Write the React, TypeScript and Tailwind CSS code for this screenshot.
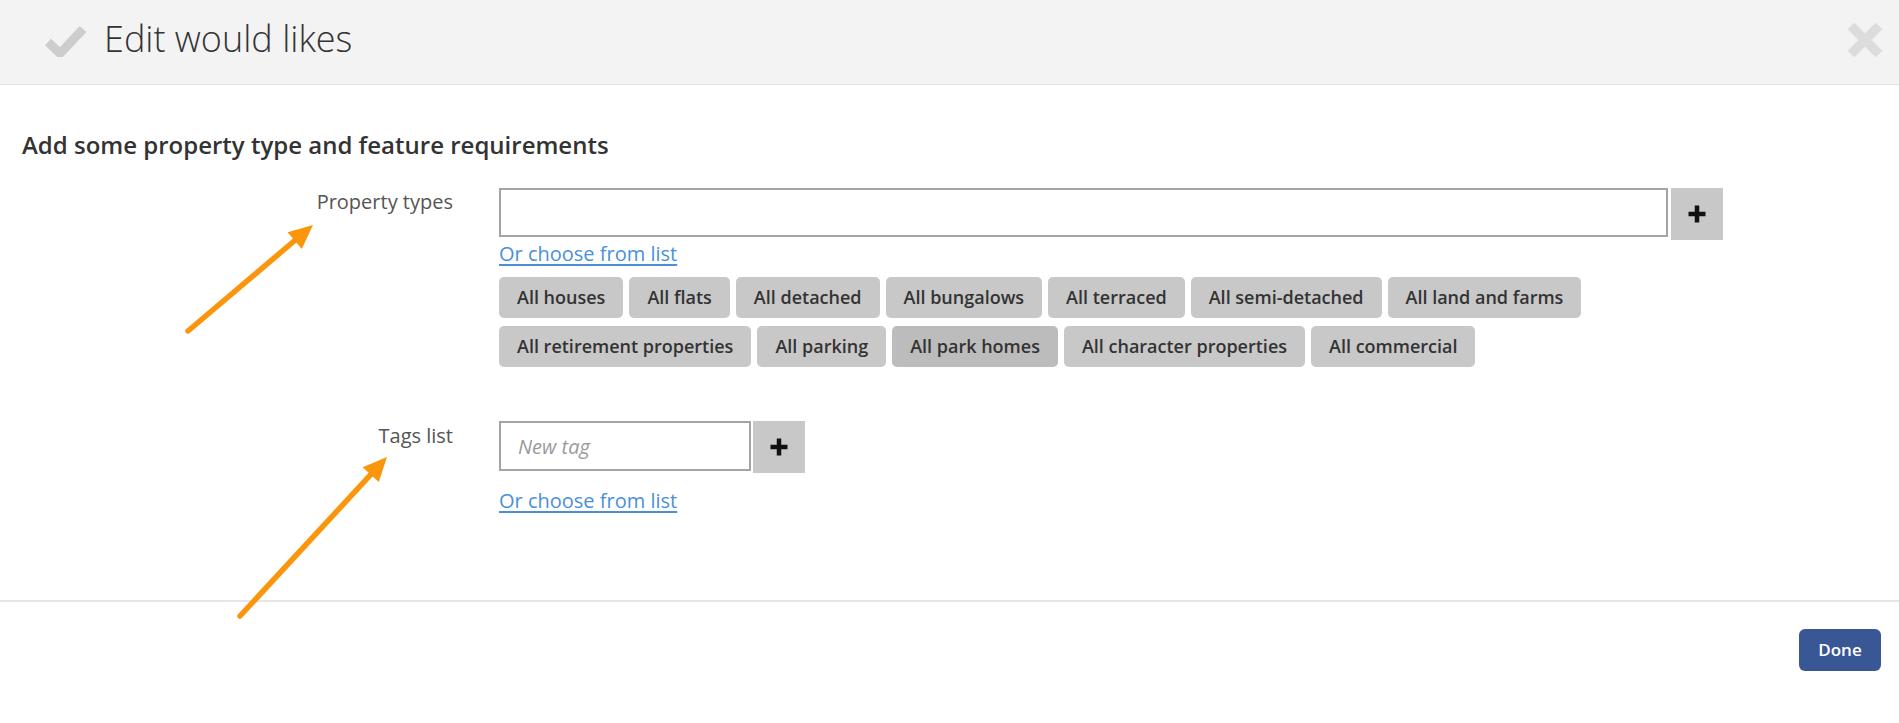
import React from 'react';

const propertyTypes = [
    'All houses',
    'All flats',
    'All detached',
    'All bungalows',
    'All terraced',
    'All semi-detached',
    'All land and farms',
    'All retirement properties',
    'All parking',
    'All park homes',
    'All character properties',
    'All commercial',
];

const PlusIcon = () => (
    <svg width="20" height="20" viewBox="0 0 20 20" className="block">
        <path d="M10 1.5v17M1.5 10h17" stroke="#111" strokeWidth="4.5" fill="none" />
    </svg>
);

const Arrow: React.FC<{ x1: number; y1: number; x2: number; y2: number }> = ({ x1, y1, x2, y2 }) => {
    const dx = x2 - x1;
    const dy = y2 - y1;
    const len = Math.hypot(dx, dy);
    const ux = dx / len;
    const uy = dy / len;
    const head = 24;
    const half = 11;
    const bx = x2 - ux * head;
    const by = y2 - uy * head;
    const p1 = `${bx - uy * half},${by + ux * half}`;
    const p2 = `${bx + uy * half},${by - ux * half}`;
    return (
        <g>
            <line x1={x1} y1={y1} x2={bx + ux * 2} y2={by + uy * 2} stroke="#fb960c" strokeWidth="5.5" strokeLinecap="round" />
            <polygon points={`${x2},${y2} ${p1} ${p2}`} fill="#fb960c" />
        </g>
    );
};

export default function App() {
    return (
        <div
            className="relative w-full h-[723px] bg-white overflow-hidden"
            style={{ fontFamily: '"Open Sans", "Liberation Sans", sans-serif' }}
        >
            {/* header */}
            <div className="flex items-center h-[85px] bg-[#f3f3f3] border-b border-[#e4e4e4] pl-[45px] pr-[16px]">
                <svg width="41" height="32" viewBox="0 0 41 32" className="mb-[3px] shrink-0">
                    <polyline points="3,17 15,28.5 38,4" stroke="#cdcdcd" strokeWidth="9" fill="none" />
                </svg>
                <h1 className="ml-[18px] pb-[7px] text-[36px] font-light leading-none text-[#333]">Edit would likes</h1>
                <button className="ml-auto mb-[5px]">
                    <svg width="36" height="36" viewBox="0 0 36 36" className="block">
                        <path d="M4 4L32 32M32 4L4 32" stroke="#dcdcdc" strokeWidth="9.5" fill="none" />
                    </svg>
                </button>
            </div>

            {/* body */}
            <div className="px-[22px]">
                <h2 className="mt-[45px] text-[24px] font-semibold leading-[29px] text-[#333]">
                    Add some property type and feature requirements
                </h2>

                <div className="flex mt-[29px]">
                    <label className="w-[431px] shrink-0 text-right text-[20px] leading-[24px] pt-[2px] text-[#555]">
                        Property types
                    </label>
                    <div className="ml-[46px] w-[1224px]">
                        <div className="flex items-start">
                            <input type="text" className="w-[1169px] h-[49px] border-2 border-[#a4a4a4] bg-white outline-none" />
                            <button className="ml-[3px] w-[52px] h-[52px] bg-[#c8c8c8] flex items-center justify-center">
                                <PlusIcon />
                            </button>
                        </div>
                        <a href="#" className="block w-fit text-[20px] leading-[28px] text-[#4a90d9] underline underline-offset-[3px]">
                            Or choose from list
                        </a>
                        <div className="mt-[9px] flex flex-wrap gap-x-[6px] gap-y-[8px]">
                            {propertyTypes.map((t) => (
                                <button
                                    key={t}
                                    className={`h-[41px] px-[18px] rounded-[5px] text-[18px] font-semibold text-[#333] ${
                                        t === 'All park homes' ? 'bg-[#bcbcbc]' : 'bg-[#c8c8c8]'
                                    }`}
                                >
                                    {t}
                                </button>
                            ))}
                        </div>
                    </div>
                </div>

                <div className="flex mt-[54px]">
                    <label className="w-[431px] shrink-0 text-right text-[20px] leading-[24px] pt-[3px] text-[#555]">
                        Tags list
                    </label>
                    <div className="ml-[46px]">
                        <div className="flex items-start">
                            <input
                                type="text"
                                placeholder="New tag"
                                className="w-[252px] h-[50px] border-2 border-[#a4a4a4] bg-white pl-[17px] text-[20px] italic placeholder:text-[#9a9a9a] outline-none"
                            />
                            <button className="ml-[2px] w-[52px] h-[52px] bg-[#c8c8c8] flex items-center justify-center">
                                <PlusIcon />
                            </button>
                        </div>
                        <a href="#" className="mt-[14px] block w-fit text-[20px] leading-[28px] text-[#4a90d9] underline underline-offset-[3px]">
                            Or choose from list
                        </a>
                    </div>
                </div>
            </div>

            <div className="mt-[85px] h-[2px] bg-[#e6e6e6]" />

            <div className="flex justify-end pr-[18px] pt-[27px]">
                <button className="w-[82px] h-[42px] rounded-[6px] bg-[#3a5795] text-white text-[17px] font-semibold">
                    Done
                </button>
            </div>

            {/* annotation arrows */}
            <svg className="absolute inset-0 pointer-events-none" width="1899" height="723">
                <Arrow x1={188} y1={331} x2={313} y2={225} />
                <Arrow x1={240} y1={616} x2={387} y2={457} />
            </svg>
        </div>
    );
}
